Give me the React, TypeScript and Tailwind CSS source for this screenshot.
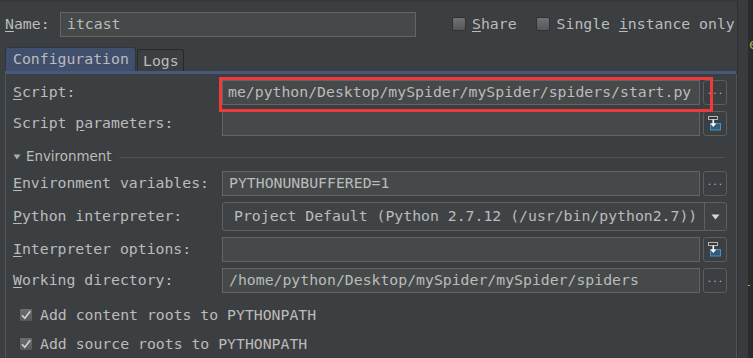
import React from 'react'

const mono = "font-['DejaVu_Sans_Mono',monospace]"

function Field({ children, pad = 'pl-[5px]' }: { children?: React.ReactNode; pad?: string }) {
  return (
    <div className={`w-[478px] h-[25px] bg-[#45494a] border border-[#646464] flex items-center ${pad} overflow-hidden whitespace-nowrap`}>
      {children}
    </div>
  )
}

function DotsButton() {
  return (
    <div className="w-[24px] h-[25px] ml-[3px] rounded-[3px] border border-[#5b5d5f] bg-[#3c3f41] flex items-center justify-center text-[9px] leading-none text-[#bbbbbb] pb-[2px]">
      ...
    </div>
  )
}

function ExpandButton() {
  return (
    <div className="w-[24px] h-[25px] ml-[3px] rounded-[3px] border border-[#5b5d5f] bg-[#3c3f41] flex items-center justify-center">
      <svg width="14" height="15" viewBox="0 0 14 15">
        <rect x="2.5" y="7.5" width="10" height="6.5" fill="#3a5a73" stroke="#3b93cc" />
        <rect x="0.5" y="0.5" width="9" height="3" fill="#333537" stroke="#b5b5b5" />
        <rect x="4.5" y="3.5" width="1.6" height="5" fill="#ffffff" />
        <polygon points="2.3,7.5 8.3,7.5 5.3,11" fill="#ffffff" />
      </svg>
    </div>
  )
}

function Row({ label, children, mt = 'mt-[6px]' }: { label: React.ReactNode; children: React.ReactNode; mt?: string }) {
  return (
    <div className={`flex items-center ${mt}`}>
      <div className="w-[209px] whitespace-nowrap">{label}</div>
      {children}
    </div>
  )
}

function SmallBox() {
  return (
    <div className="w-[14px] h-[14px] rounded-[2px] border border-[#2f3133] bg-gradient-to-b from-[#6f7173] to-[#55585a]" />
  )
}

function CheckedBox() {
  return (
    <div className="w-[14px] h-[14px] rounded-[2px] border border-[#3a3c3e] bg-gradient-to-b from-[#6c6e70] to-[#56595b] flex items-center justify-center">
      <svg width="12" height="12" viewBox="0 0 12 12">
        <path d="M2 6.2 L4.8 9.2 L10.2 2.2" fill="none" stroke="#d4d4d4" strokeWidth="1.6" />
      </svg>
    </div>
  )
}

export default function App() {
  return (
    <div className={`w-[753px] h-[358px] overflow-hidden flex bg-[#3c3f41] text-[#bbbbbb] text-[14.8px] leading-none ${mono}`}>
      <div className="w-[737px] flex flex-col border-t-2 border-[#35383a]">
        {/* header */}
        <div className="flex items-center pt-[10px] pl-[5px]">
          <div className="w-[55px]"><u className="underline-offset-2">N</u>ame:</div>
          <div className="w-[356px] h-[25px] bg-[#45494a] border border-[#646464] flex items-center pl-[6px]">itcast</div>
          <div className="flex items-center ml-[36px]">
            <SmallBox />
            <span className="ml-[6px]"><u className="underline-offset-2">S</u>hare</span>
          </div>
          <div className="flex items-center ml-[19px]">
            <SmallBox />
            <span className="ml-[7px] whitespace-nowrap">Single <u className="underline-offset-2">i</u>nstance only</span>
          </div>
        </div>

        {/* tabs */}
        <div className="flex items-end pl-[5px] mt-[10px] h-[24px]">
          <div className="w-[131px] h-[24px] rounded-t-[3px] bg-[#40506c] border border-b-0 border-[#2f3440] flex items-center pl-[7px] pb-[1px]">Configuration</div>
          <div className="w-[47px] h-[22px] ml-[1px] rounded-t-[3px] border border-b-0 border-[#26282a] flex items-center pl-[5px] pt-[1px]">Logs</div>
        </div>
        <div className="ml-[5px] w-[731px] h-[3px] bg-[#47587a]" />

        {/* panel */}
        <div className="ml-[5px] w-[732px] flex-1 border-l border-r border-[#535658] pl-[7px] pt-[6px]">
          <Row label={<><u className="underline-offset-2">S</u>cript:</>} mt="mt-0">
            <div className="relative">
              <Field>me/python/Desktop/mySpider/mySpider/spiders/start.py</Field>
              <div className="absolute left-[-3px] top-[-3px] w-[494px] h-[35px] border-[3px] border-[#ee3a3a] z-10" />
            </div>
            <DotsButton />
          </Row>
          <Row label={<>Script <u className="underline-offset-2">p</u>arameters:</>}>
            <Field />
            <ExpandButton />
          </Row>

          <div className="flex items-center mt-[11px] h-[20px]">
            <svg width="8" height="6" viewBox="0 0 8 6">
              <polygon points="0.5,0.5 7.5,0.5 4,5.5" fill="#a9abad" />
            </svg>
            <span className="ml-[5px] font-['DejaVu_Sans',sans-serif] text-[13.4px]">Environment</span>
            <div className="ml-[7px] w-[606px] h-px bg-[#505355]" />
          </div>

          <Row label={<><u className="underline-offset-2">E</u>nvironment variables:</>} mt="mt-[4px]">
            <Field pad="pl-[6px]">PYTHONUNBUFFERED=1</Field>
            <DotsButton />
          </Row>
          <Row label={<><u className="underline-offset-2">P</u>ython interpreter:</>}>
            <div className="w-[505px] h-[29px] rounded-[3px] border border-[#5e6163] bg-[#404345] flex items-center">
              <div className="w-[481px] pl-[11px] whitespace-nowrap">Project Default (Python 2.7.12 (/usr/bin/python2.7))</div>
              <div className="w-px self-stretch bg-[#5e6163]" />
              <div className="flex-1 flex items-center justify-center">
                <svg width="9" height="6" viewBox="0 0 9 6">
                  <polygon points="0.5,0.5 8.5,0.5 4.5,5.5" fill="#d8d8d8" />
                </svg>
              </div>
            </div>
          </Row>
          <Row label={<><u className="underline-offset-2">I</u>nterpreter options:</>}>
            <Field />
            <ExpandButton />
          </Row>
          <Row label={<><u className="underline-offset-2">W</u>orking directory:</>}>
            <Field pad="pl-[6px]">/home/python/Desktop/mySpider/mySpider/spiders</Field>
            <DotsButton />
          </Row>

          <div className="flex items-center h-[20px] mt-[12px] pl-[6px]">
            <CheckedBox />
            <span className="ml-[7px]">Add content roots to PYTHONPATH</span>
          </div>
          <div className="flex items-center h-[20px] mt-[9px] pl-[6px]">
            <CheckedBox />
            <span className="ml-[7px]">Add source roots to PYTHONPATH</span>
          </div>
        </div>
      </div>

      {/* editor edge */}
      <div className="flex-1 flex bg-[#393c3e]">
        <div className="w-[11px] border-l border-[#2e3032]" />
        <div className="flex-1 bg-[#2b2b2b] relative overflow-hidden">
          <span className="absolute left-[1px] top-[37px] text-[14px] text-[#a5b04a]">e</span>
          <div className="absolute left-0 top-[285px] w-[2px] h-px bg-[#a5b04a]" />
        </div>
      </div>
    </div>
  )
}
